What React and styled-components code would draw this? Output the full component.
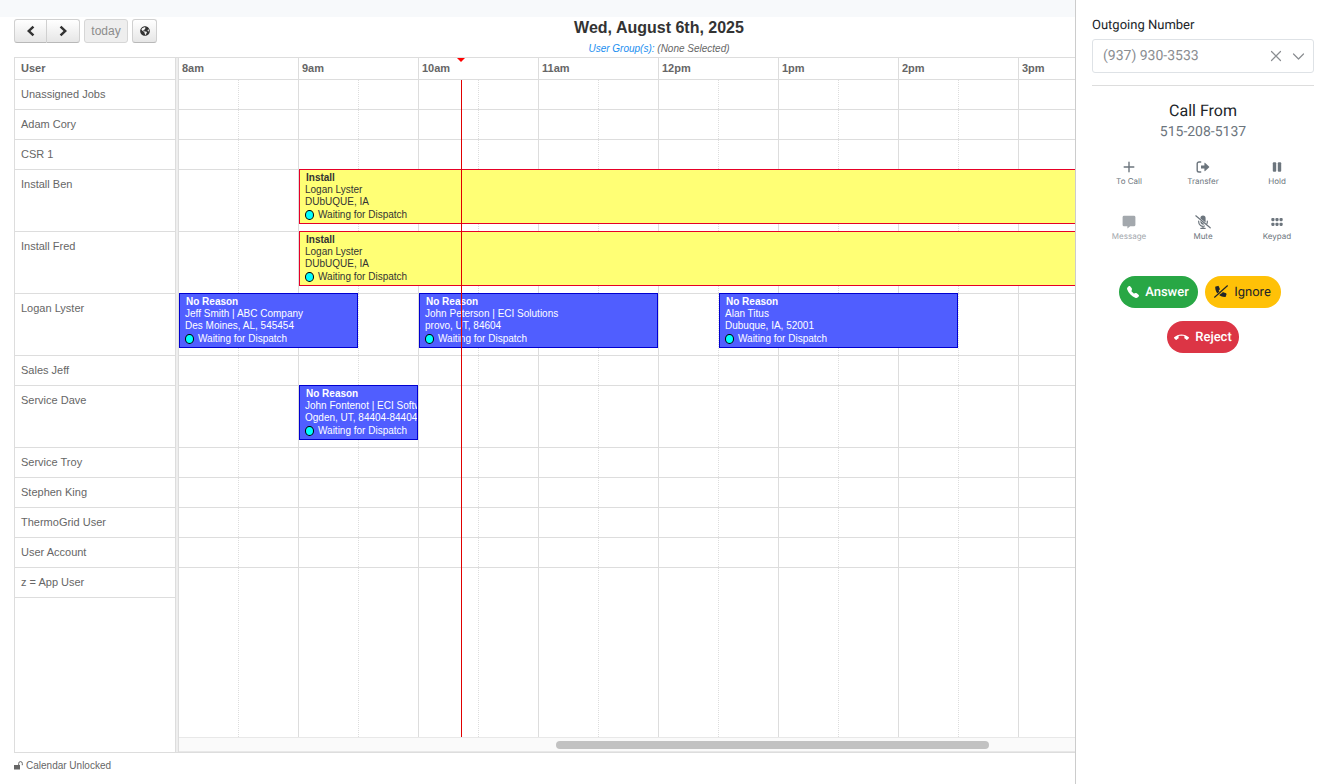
import React from 'react';
import styled, { createGlobalStyle } from 'styled-components';
import { BsTelephoneFill } from 'react-icons/bs';
import { FaGlobeAmericas } from 'react-icons/fa';
import { MdCallEnd } from 'react-icons/md';

const line = '#ddd';
const sans = '"Liberation Sans", Arial, sans-serif';
const panelFont = 'Roboto, sans-serif';

const GlobalStyle = createGlobalStyle`
    *, *::before, *::after {
        box-sizing: border-box;
    }
    body {
        margin: 0;
        background: white;
        color: #666;
        font-family: ${sans};
        font-size: 11px;
    }
    button, select {
        font-family: inherit;
        text-rendering: inherit;
        cursor: pointer;
    }
`;

const Page = styled.div`
    display: flex;
    flex-direction: column;
    height: 100vh;
    min-height: 660px;
    overflow: hidden;
`;

const TopStrip = styled.div`
    flex: none;
    height: 17px;
    background: #f7f9fb;
`;

const Schedule = styled.main`
    display: flex;
    flex: 1;
    flex-direction: column;
    min-height: 0;
    padding: 0 17px 0 14px;
`;

const Toolbar = styled.header`
    display: grid;
    grid-template-columns: 1fr auto 1fr;
    flex: none;
    height: 40px;
    padding-top: 2px;
`;

const ToolbarButtons = styled.div`
    display: flex;
    gap: 4px;
`;

const ButtonGroup = styled.div`
    display: flex;
`;

const ToolButton = styled.button`
    display: flex;
    align-items: center;
    justify-content: center;
    width: ${props => props.$width}px;
    height: 24px;
    padding: 0;
    border: 1px solid #d0d0d0;
    border-bottom-color: #b8b8b8;
    border-radius: 3px;
    background: linear-gradient(#fff, #e6e6e6);
    color: #333;
    font-size: 12px;
    &:disabled {
        border-color: #d6d6d6;
        background: #eee;
        color: #8c8c8c;
        cursor: default;
    }
    ${ButtonGroup} &:first-child {
        border-radius: 3px 0 0 3px;
    }
    ${ButtonGroup} &:last-child {
        border-left: none;
        border-radius: 0 3px 3px 0;
    }
`;

const Heading = styled.div`
    text-align: center;
`;

const Title = styled.h1`
    margin: 0;
    color: #333;
    font-size: 16px;
    font-weight: bold;
    line-height: 18px;
`;

const Groups = styled.div`
    padding-top: 5px;
    font-size: 10px;
    font-style: italic;
    line-height: 14px;
    a {
        color: #1a8ef0;
        text-decoration: none;
    }
`;

const Calendar = styled.section`
    display: flex;
    flex: 1;
    min-height: 0;
    border: 1px solid ${line};
`;

const ResourceTable = styled.table`
    flex: none;
    align-self: flex-start;
    width: 160px;
    border-collapse: separate;
    border-spacing: 0;
    th, td {
        padding: 0 6px;
        border-bottom: 1px solid ${line};
        text-align: left;
    }
    th {
        height: 22px;
        line-height: 21px;
    }
`;

const ResourceCell = styled.td`
    height: ${props => (props.$tall ? 62 : 30)}px;
    line-height: 29px;
    vertical-align: top;
`;

const Divider = styled.div`
    flex: none;
    width: 4px;
    border: solid ${line};
    border-width: 0 1px;
    background: #eee;
`;

const Timeline = styled.div`
    display: flex;
    flex: 1;
    flex-direction: column;
    min-width: 0;
    overflow: hidden;
`;

const Hours = styled.div`
    position: relative;
    display: flex;
    flex: none;
    height: 22px;
    border-bottom: 1px solid ${line};
`;

const Hour = styled.div`
    flex: none;
    width: 120px;
    padding-left: 3px;
    border-right: 1px solid ${line};
    font-weight: bold;
    line-height: 21px;
`;

const NowArrow = styled.div`
    position: absolute;
    top: 0;
    width: 0;
    margin-left: -4px;
    border: solid transparent;
    border-width: 4px 4px 0;
    border-top-color: red;
`;

const NowLine = styled.div`
    position: absolute;
    top: 0;
    bottom: 0;
    border-left: 1px solid #e00000;
`;

const Lanes = styled.div`
    position: relative;
    flex: 1;
    min-height: 0;
`;

const SlotLines = styled.div`
    position: absolute;
    inset: 0;
    display: flex;
`;

const Slot = styled.div`
    flex: none;
    width: 60px;
    border-right: 1px ${props => (props.$half ? 'dotted' : 'solid')} ${line};
`;

const Lane = styled.div`
    position: relative;
    display: grid;
    grid-template-columns: repeat(${props => props.$slots}, 60px);
    height: ${props => (props.$tall ? 62 : 30)}px;
    border-bottom: ${props => (props.$last ? 'none' : `1px solid ${line}`)};
`;

const Job = styled.article`
    grid-column: ${props => props.$from} / ${props => props.$to};
    height: 55px;
    margin: -1px 1px 0 0;
    padding: 2px 0 0 5px;
    overflow: hidden;
    border: 1px solid ${props => (props.$install ? '#e60026' : '#0000d0')};
    background: ${props => (props.$install ? '#ffff75' : '#505eff')};
    color: ${props => (props.$install ? '#333' : 'white')};
    font-size: 10px;
    line-height: 12px;
    white-space: nowrap;
`;

const JobTitle = styled.div`
    padding-left: 1px;
    font-weight: bold;
`;

const JobStatus = styled.div`
    display: flex;
    align-items: center;
    gap: 4px;
    height: 14px;
    &::before {
        content: '';
        width: 9px;
        height: 10px;
        border: 1px solid black;
        border-radius: 50%;
        background: cyan;
    }
`;

const ScrollTrack = styled.div`
    flex: none;
    height: 15px;
    padding: 3px 0 0 377px;
    border: solid #e8e8e8;
    border-width: 1px 0;
    background: #fafafa;
`;

const ScrollThumb = styled.div`
    width: 433px;
    height: 8px;
    border-radius: 4px;
    background: #c2c2c2;
`;

const LockNote = styled.footer`
    display: flex;
    flex: none;
    gap: 3px;
    height: 31px;
    padding-top: 6px;
    font-size: 10px;
    line-height: 14px;
    svg {
        margin-top: 2px;
    }
`;

const CallPanel = styled.aside`
    position: fixed;
    top: 0;
    right: 0;
    bottom: 0;
    width: 246px;
    padding: 17px 7px 0 16px;
    border-left: 1px solid #ccc;
    background: white;
    color: #212529;
    font-family: ${panelFont};
    font-size: 13px;
    text-rendering: geometricPrecision;
`;

const NumberLabel = styled.label`
    display: block;
    line-height: 18px;
`;

const NumberField = styled.div`
    display: flex;
    align-items: center;
    height: 34px;
    margin-top: 4px;
    padding: 0 8px 0 10px;
    border: 1px solid #dee2e6;
    border-radius: 3px;
    color: #8a8d91;
`;

const NumberSelect = styled.select`
    flex: 1;
    min-width: 0;
    padding: 0;
    border: none;
    appearance: none;
    background: transparent;
    color: inherit;
    font-size: 14px;
`;

const ClearButton = styled.button`
    display: flex;
    margin-right: 10px;
    padding: 0;
    border: none;
    background: transparent;
    color: inherit;
`;

const Caller = styled.div`
    margin-top: 12px;
    padding-top: 14px;
    border-top: 1px solid ${line};
    text-align: center;
`;

const CallerTitle = styled.h2`
    margin: 0;
    font-size: 16px;
    font-weight: 400;
    line-height: 22px;
`;

const CallerNumber = styled.div`
    color: #6c757d;
    font-size: 14px;
    line-height: 20px;
`;

const Actions = styled.div`
    display: grid;
    grid-template-columns: repeat(3, 1fr);
    grid-auto-rows: 55px;
    margin-top: 18px;
`;

const Action = styled.button`
    display: flex;
    flex-direction: column;
    align-items: center;
    align-self: start;
    gap: 1px;
    padding: 0;
    border: none;
    background: transparent;
    color: #6c757d;
    font-family: Inter, sans-serif;
    font-size: 8px;
    line-height: 12px;
    &:disabled {
        color: #a3a8ad;
        cursor: default;
    }
`;

const Answers = styled.div`
    display: flex;
    flex-wrap: wrap;
    justify-content: center;
    row-gap: 13px;
    margin-top: 6px;
`;

const Pill = styled.button`
    display: flex;
    align-items: center;
    justify-content: center;
    gap: 6px;
    width: ${props => props.$width}px;
    height: 32px;
    padding: 0;
    border: none;
    border-radius: 16px;
    background: ${props => props.$color};
    color: ${props => (props.$dark ? '#212529' : 'white')};
    font-size: 13px;
    font-weight: ${props => (props.$dark ? 400 : 500)};
    &:not(:last-child) {
        margin-right: 7px;
    }
`;

const Icon = ({ size = 14, view = 16, width, children }) => (
    <svg width={width || size} height={size} viewBox={`0 0 ${width || view} ${view}`} fill="currentColor" aria-hidden="true">
        {children}
    </svg>
);

const Stroke = ({ d, width = 1 }) => (
    <path d={d} fill="none" stroke="currentColor" strokeWidth={width} strokeLinecap="round" strokeLinejoin="round" />
);

const PrevIcon = () => <Icon size={12} view={12}><path d="M7.6.8 9.3 2.5 5.5 6l3.8 3.5-1.7 1.7L2 6z" /></Icon>;
const NextIcon = () => <Icon size={12} view={12}><path d="M4.4.8 2.7 2.5 6.5 6 2.7 9.5l1.7 1.7L10 6z" /></Icon>;

const UnlockIcon = () => (
    <Icon size={9} view={9}>
        <path d="M0 4h6v4.5H0z" />
        <Stroke d="M4.7 4V2.4a1.8 1.8 0 0 1 3.6 0v1.4" />
    </Icon>
);

const PlusIcon = () => <Icon size={14} view={14}><Stroke width={1.4} d="M7 2.2v9.6M2.2 7h9.6" /></Icon>;

const TransferIcon = () => (
    <Icon size={14} view={14}>
        <Stroke width={1.4} d="M4.7 2H3a1.8 1.8 0 0 0-1.8 1.8v6.4A1.8 1.8 0 0 0 3 12h1.7" />
        <path d="M5 5.4h3.4V3.2c0-.5.5-.6.8-.3L13 6.4a.8.8 0 0 1 0 1.2l-3.8 3.5c-.3.3-.8.2-.8-.3V8.6H5z" />
    </Icon>
);

const PauseIcon = () => (
    <Icon size={14} view={14}>
        <rect x="2.8" y="2.2" width="3.4" height="9.6" rx="1" />
        <rect x="7.8" y="2.2" width="3.4" height="9.6" rx="1" />
    </Icon>
);

const MessageIcon = () => (
    <Icon size={14} view={14}>
        <path d="M2 .8h10A1.4 1.4 0 0 1 13.4 2v8A1.4 1.4 0 0 1 12 11.3H8.2L5.4 13.6v-2.3H2A1.4 1.4 0 0 1 .6 10V2A1.4 1.4 0 0 1 2 .8z" />
    </Icon>
);

const MuteIcon = () => (
    <Icon size={14} view={14} width={16}>
        <path d="M5.4 3.2a2.6 2.6 0 0 1 5.2 0v4.4L5.4 3.4zM5.4 5.8l4 3.4a2.6 2.6 0 0 1-4-2.2z" />
        <Stroke width={1.2} d="M3.7 6v1a4.3 4.3 0 0 0 5.8 4M12.3 6v1c0 .6-.1 1.1-.3 1.5M8 11.3v2M5.8 13.3h4.4M.8.8l14.4 12" />
    </Icon>
);

const KeypadIcon = () => (
    <Icon size={14} view={14}>
        {[2.9, 7, 11.1].map(x => [4.6, 9.3].map(y => (
            <rect key={`${x}-${y}`} x={x - 1.6} y={y - 1.6} width="3.2" height="3.2" rx="1.1" />
        )))}
    </Icon>
);

const IgnoreIcon = () => (
    <Icon size={14} view={14}>
        <path d="M1.7 1.6 3.9.9c.4-.1.7.1.9.5l1 2.4c.1.3 0 .7-.2.9l-1 .9 2.8 3 1-1.2c.2-.3.6-.4.9-.2l2.7 1.1c.4.2.6.5.5.9l-.7 2.3c-.1.4-.4.6-.8.6C5.6 12.1 1.2 7.5 1.2 2.3c0-.4.2-.6.5-.7z" />
        <path d="M.4 12.8 13.5.8" stroke="#ffc107" strokeWidth="2.6" />
        <Stroke width={1.2} d="M.6 12.2 13.4.8" />
    </Icon>
);

const hours = ['8am', '9am', '10am', '11am', '12pm', '1pm', '2pm', '3pm'];
const dayStart = 8;
const now = 10.35;
const hourWidth = 120;

const users = [
    { name: 'Unassigned Jobs' },
    { name: 'Adam Cory' },
    { name: 'CSR 1' },
    { name: 'Install Ben', jobs: [{ start: 9, end: 16, title: 'Install', customer: 'Logan Lyster', place: 'DUbUQUE, IA' }] },
    { name: 'Install Fred', jobs: [{ start: 9, end: 16, title: 'Install', customer: 'Logan Lyster', place: 'DUbUQUE, IA' }] },
    {
        name: 'Logan Lyster',
        jobs: [
            { start: 8, end: 9.5, title: 'No Reason', customer: 'Jeff Smith | ABC Company', place: 'Des Moines, AL, 545454' },
            { start: 10, end: 12, title: 'No Reason', customer: 'John Peterson | ECI Solutions', place: 'provo, UT, 84604' },
            { start: 12.5, end: 14.5, title: 'No Reason', customer: 'Alan Titus', place: 'Dubuque, IA, 52001' }
        ]
    },
    { name: 'Sales Jeff' },
    { name: 'Service Dave', jobs: [{ start: 9, end: 10, title: 'No Reason', customer: 'John Fontenot | ECI Software', place: 'Ogden, UT, 84404-84404' }] },
    { name: 'Service Troy' },
    { name: 'Stephen King' },
    { name: 'ThermoGrid User' },
    { name: 'User Account' },
    { name: 'z = App User' }
];

const slotOf = hour => (hour - dayStart) * 2 + 1;

const JobCard = ({ job }) => (
    <Job $from={slotOf(job.start)} $to={slotOf(job.end)} $install={job.title === 'Install'}>
        <JobTitle>{job.title}</JobTitle>
        <div>{job.customer}</div>
        <div>{job.place}</div>
        <JobStatus>Waiting for Dispatch</JobStatus>
    </Job>
);

const ScheduleToolbar = () => (
    <Toolbar>
        <ToolbarButtons>
            <ButtonGroup>
                <ToolButton $width={33} aria-label="Previous day"><PrevIcon /></ToolButton>
                <ToolButton $width={33} aria-label="Next day"><NextIcon /></ToolButton>
            </ButtonGroup>
            <ToolButton $width={44} disabled>today</ToolButton>
            <ToolButton $width={25} aria-label="Map"><FaGlobeAmericas size={10} /></ToolButton>
        </ToolbarButtons>
        <Heading>
            <Title>Wed, August 6th, 2025</Title>
            <Groups><a href="#groups">User Group(s):</a> (None Selected)</Groups>
        </Heading>
    </Toolbar>
);

const DayView = () => {
    const nowLeft = Math.round((now - dayStart) * hourWidth);
    return (
        <Calendar>
            <ResourceTable>
                <thead>
                    <tr><th scope="col">User</th></tr>
                </thead>
                <tbody>
                    {users.map(user => (
                        <tr key={user.name}>
                            <ResourceCell $tall={!!user.jobs}>{user.name}</ResourceCell>
                        </tr>
                    ))}
                </tbody>
            </ResourceTable>
            <Divider />
            <Timeline>
                <Hours>
                    {hours.map(hour => <Hour key={hour}>{hour}</Hour>)}
                    <NowArrow style={{ left: `${nowLeft}px` }} />
                </Hours>
                <Lanes>
                    <SlotLines>
                        {hours.map(hour => (
                            <React.Fragment key={hour}>
                                <Slot $half />
                                <Slot />
                            </React.Fragment>
                        ))}
                    </SlotLines>
                    {users.map((user, i) => (
                        <Lane
                            key={user.name}
                            $slots={hours.length * 2}
                            $tall={!!user.jobs}
                            $last={i === users.length - 1}
                        >
                            {(user.jobs || []).map(job => <JobCard key={job.start} job={job} />)}
                        </Lane>
                    ))}
                    <NowLine style={{ left: `${nowLeft}px` }} />
                </Lanes>
                <ScrollTrack><ScrollThumb /></ScrollTrack>
            </Timeline>
        </Calendar>
    );
};

const Dialer = () => (
    <CallPanel>
        <NumberLabel htmlFor="outgoing">Outgoing Number</NumberLabel>
        <NumberField>
            <NumberSelect id="outgoing" defaultValue="main">
                <option value="main">(937) 930-3533</option>
            </NumberSelect>
            <ClearButton aria-label="Clear number">
                <Icon size={12} view={12}><Stroke d="M1.5 1.5l9 9M10.5 1.5l-9 9" width={1.2} /></Icon>
            </ClearButton>
            <Icon size={13} view={13}><Stroke d="M1.5 4l5 5 5-5" width={1.2} /></Icon>
        </NumberField>
        <Caller>
            <CallerTitle>Call From</CallerTitle>
            <CallerNumber>515-208-5137</CallerNumber>
        </Caller>
        <Actions>
            <Action><PlusIcon />To Call</Action>
            <Action><TransferIcon />Transfer</Action>
            <Action><PauseIcon />Hold</Action>
            <Action disabled><MessageIcon />Message</Action>
            <Action><MuteIcon />Mute</Action>
            <Action><KeypadIcon />Keypad</Action>
        </Actions>
        <Answers>
            <Pill $width={79} $color="#28a745"><BsTelephoneFill size={12} />Answer</Pill>
            <Pill $width={76} $color="#ffc107" $dark><IgnoreIcon />Ignore</Pill>
            <Pill $width={72} $color="#dc3545"><MdCallEnd size={15} />Reject</Pill>
        </Answers>
    </CallPanel>
);

const App = () => (
    <Page>
        <GlobalStyle />
        <TopStrip />
        <Schedule>
            <ScheduleToolbar />
            <DayView />
            <LockNote><UnlockIcon />Calendar Unlocked</LockNote>
        </Schedule>
        <Dialer />
    </Page>
);

export default App;
